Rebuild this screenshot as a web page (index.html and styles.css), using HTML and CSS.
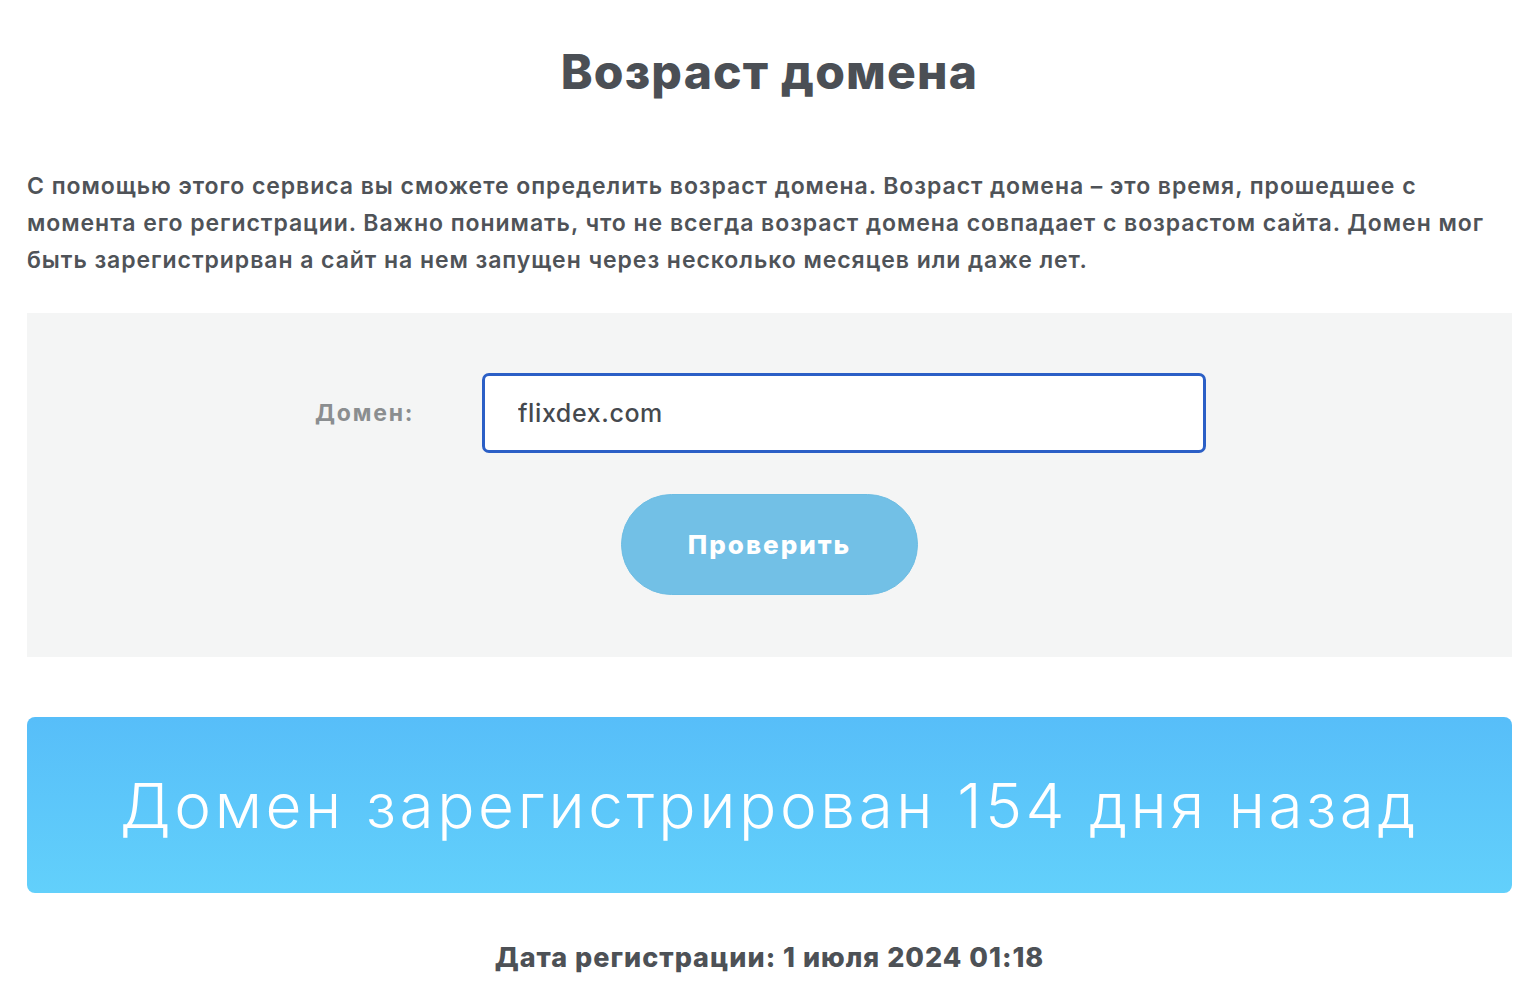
FILE: index.html
```html
<!DOCTYPE html>
<html lang="ru">
<head>
<meta charset="utf-8">
<title>Возраст домена</title>
<link rel="stylesheet" href="styles.css">
</head>
<body>
<main class="page">
  <h1 class="title">Возраст домена</h1>
  <p class="intro">С помощью этого сервиса вы сможете определить возраст домена. Возраст домена – это время, прошедшее с момента его регистрации. Важно понимать, что не всегда возраст домена совпадает с возрастом сайта. Домен мог быть зарегистрирван а сайт на нем запущен через несколько месяцев или даже лет.</p>
  <form class="check-panel">
    <div class="field-row">
      <label class="field-label" for="domain">Домен:</label>
      <input class="field-input" id="domain" type="text" value="flixdex.com">
    </div>
    <button class="check-btn" type="button">Проверить</button>
  </form>
  <div class="result-banner">Домен зарегистрирован 154 дня назад</div>
  <p class="reg-date">Дата регистрации: 1 июля 2024 01:18</p>
</main>
</body>
</html>
```
FILE: styles.css
```css
* { box-sizing: border-box; }
html, body { margin: 0; padding: 0; background: #ffffff; }
body {
  font-family: Inter, "Noto Sans", "DejaVu Sans", sans-serif;
  color: #4e5257;
}
.page {
  padding: 0 28px 40px 27px;
}
.title {
  margin: 0;
  padding-top: 43px;
  height: 126px;
  text-align: center;
  font-size: 48px;
  font-weight: 800;
  line-height: 58px;
  color: #4b4f55;
  letter-spacing: 1.2px;
}
.intro {
  margin: 42px 0 0;
  font-size: 23px;
  font-weight: 600;
  line-height: 37px;
  letter-spacing: 0.95px;
  color: #4f5358;
}
.check-panel {
  margin: 34px 0 0;
  background: #f4f5f5;
  height: 344px;
  padding-top: 60px;
  display: flex;
  flex-direction: column;
  align-items: center;
}
.field-row {
  display: flex;
  align-items: center;
  margin-left: -18px;
}
.field-label {
  width: 167px;
  font-size: 23px;
  font-weight: 700;
  letter-spacing: 1.8px;
  color: #8b8e90;
}
.field-input {
  width: 724px;
  height: 80px;
  border: 3px solid #2b5fc6;
  border-radius: 7px;
  background: #fff;
  padding: 0 33px;
  font-family: Inter, sans-serif;
  font-size: 25px;
  font-weight: 500;
  letter-spacing: 0.6px;
  color: #45494e;
  outline: none;
}
.check-btn {
  margin-top: 41px;
  width: 297px;
  height: 101px;
  border: 1px solid #6dbde3;
  border-radius: 51px;
  background: #72c0e6;
  color: #ffffff;
  font-family: Inter, sans-serif;
  font-size: 26px;
  font-weight: 800;
  letter-spacing: 2px;
  cursor: pointer;
}
.result-banner {
  margin-top: 60px;
  height: 176px;
  border-radius: 8px;
  background: linear-gradient(180deg, #57bef9 0%, #62d0fb 100%);
  display: flex;
  align-items: center;
  justify-content: center;
  color: #ffffff;
  font-size: 62px;
  font-weight: 300;
  letter-spacing: 3.6px;
}
.reg-date {
  margin: 48px 0 0;
  text-align: center;
  font-size: 27px;
  font-weight: 800;
  letter-spacing: 1px;
  color: #4d5156;
}
```
